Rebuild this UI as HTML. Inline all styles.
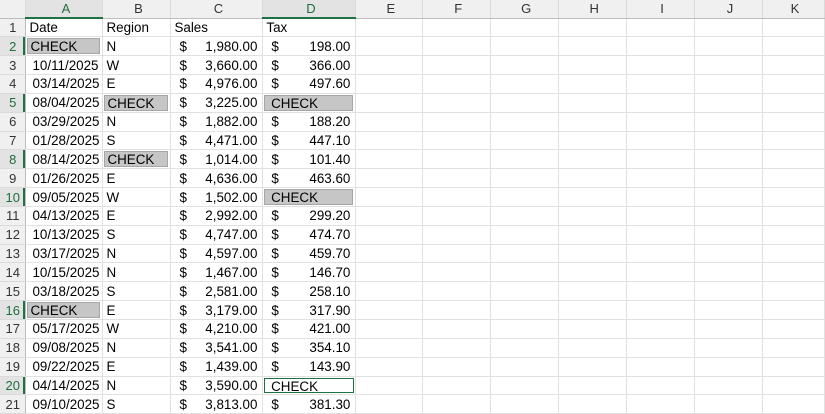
<!DOCTYPE html>
<html><head><meta charset="utf-8"><style>
*{margin:0;padding:0;box-sizing:border-box}
body{width:825px;height:406px;overflow:hidden;background:#fff;font-family:"Liberation Sans",Arial,sans-serif;font-size:13.4px;color:#000}
table{border-collapse:collapse;table-layout:fixed;position:absolute;left:0;top:0}
td{border-right:1px solid #e1e1e1;border-bottom:1px solid #e1e1e1;height:18.85px;white-space:nowrap;overflow:hidden;padding:0 0 0 3px;position:relative;line-height:17px}
tr.h td{height:18px;background:#f0f0f0;text-align:center;color:#333;border-right:1px solid #dadada;border-bottom:1px solid #bdbdbd;font-size:13px}
tr.h td.s{background:#e3e3e3;color:#1e6e3e;border-bottom:2px solid #1e7145}
td.r{background:#f0f0f0;text-align:center;color:#333;border-right:1px solid #bdbdbd;border-bottom:1px solid #dadada;padding:0;font-size:13px}
td.rs{background:#e3e3e3;color:#1e6e3e;box-shadow:inset -2px 0 0 #1e7145}
td.d{padding-left:6px}
.c{position:absolute;left:1px;right:2px;top:1px;bottom:1px;background:#c6c6c6;border:1px solid #a6a6a6;padding-left:2px;line-height:15px}
.c.a{background:#fff;border:1px solid #1e7145;left:1px;right:1px}
.m span{float:left;padding-left:5px}
.m{text-align:right;padding-right:5px}
</style></head><body>
<table>
<colgroup><col style="width:26px"><col style="width:77px"><col style="width:68px"><col style="width:92px"><col style="width:93px"><col style="width:67px"><col style="width:68px"><col style="width:68px"><col style="width:68px"><col style="width:68px"><col style="width:68px"><col style="width:62px"></colgroup>
<tr class="h"><td></td><td class="s">A</td><td>B</td><td>C</td><td class="s">D</td><td>E</td><td>F</td><td>G</td><td>H</td><td>I</td><td>J</td><td>K</td></tr>
<tr><td class="r">1</td><td>Date</td><td>Region</td><td>Sales</td><td>Tax</td><td></td><td></td><td></td><td></td><td></td><td></td><td></td></tr>
<tr><td class="r rs">2</td><td><div class="c">CHECK</div></td><td>N</td><td class="m"><span>$</span>1,980.00</td><td class="m"><span>$</span>198.00</td><td></td><td></td><td></td><td></td><td></td><td></td><td></td></tr>
<tr><td class="r">3</td><td class="d">10/11/2025</td><td>W</td><td class="m"><span>$</span>3,660.00</td><td class="m"><span>$</span>366.00</td><td></td><td></td><td></td><td></td><td></td><td></td><td></td></tr>
<tr><td class="r">4</td><td class="d">03/14/2025</td><td>E</td><td class="m"><span>$</span>4,976.00</td><td class="m"><span>$</span>497.60</td><td></td><td></td><td></td><td></td><td></td><td></td><td></td></tr>
<tr><td class="r rs">5</td><td class="d">08/04/2025</td><td><div class="c">CHECK</div></td><td class="m"><span>$</span>3,225.00</td><td><div class="c">&nbsp;CHECK</div></td><td></td><td></td><td></td><td></td><td></td><td></td><td></td></tr>
<tr><td class="r">6</td><td class="d">03/29/2025</td><td>N</td><td class="m"><span>$</span>1,882.00</td><td class="m"><span>$</span>188.20</td><td></td><td></td><td></td><td></td><td></td><td></td><td></td></tr>
<tr><td class="r">7</td><td class="d">01/28/2025</td><td>S</td><td class="m"><span>$</span>4,471.00</td><td class="m"><span>$</span>447.10</td><td></td><td></td><td></td><td></td><td></td><td></td><td></td></tr>
<tr><td class="r rs">8</td><td class="d">08/14/2025</td><td><div class="c">CHECK</div></td><td class="m"><span>$</span>1,014.00</td><td class="m"><span>$</span>101.40</td><td></td><td></td><td></td><td></td><td></td><td></td><td></td></tr>
<tr><td class="r">9</td><td class="d">01/26/2025</td><td>E</td><td class="m"><span>$</span>4,636.00</td><td class="m"><span>$</span>463.60</td><td></td><td></td><td></td><td></td><td></td><td></td><td></td></tr>
<tr><td class="r rs">10</td><td class="d">09/05/2025</td><td>W</td><td class="m"><span>$</span>1,502.00</td><td><div class="c">&nbsp;CHECK</div></td><td></td><td></td><td></td><td></td><td></td><td></td><td></td></tr>
<tr><td class="r">11</td><td class="d">04/13/2025</td><td>E</td><td class="m"><span>$</span>2,992.00</td><td class="m"><span>$</span>299.20</td><td></td><td></td><td></td><td></td><td></td><td></td><td></td></tr>
<tr><td class="r">12</td><td class="d">10/13/2025</td><td>S</td><td class="m"><span>$</span>4,747.00</td><td class="m"><span>$</span>474.70</td><td></td><td></td><td></td><td></td><td></td><td></td><td></td></tr>
<tr><td class="r">13</td><td class="d">03/17/2025</td><td>N</td><td class="m"><span>$</span>4,597.00</td><td class="m"><span>$</span>459.70</td><td></td><td></td><td></td><td></td><td></td><td></td><td></td></tr>
<tr><td class="r">14</td><td class="d">10/15/2025</td><td>N</td><td class="m"><span>$</span>1,467.00</td><td class="m"><span>$</span>146.70</td><td></td><td></td><td></td><td></td><td></td><td></td><td></td></tr>
<tr><td class="r">15</td><td class="d">03/18/2025</td><td>S</td><td class="m"><span>$</span>2,581.00</td><td class="m"><span>$</span>258.10</td><td></td><td></td><td></td><td></td><td></td><td></td><td></td></tr>
<tr><td class="r rs">16</td><td><div class="c">CHECK</div></td><td>E</td><td class="m"><span>$</span>3,179.00</td><td class="m"><span>$</span>317.90</td><td></td><td></td><td></td><td></td><td></td><td></td><td></td></tr>
<tr><td class="r">17</td><td class="d">05/17/2025</td><td>W</td><td class="m"><span>$</span>4,210.00</td><td class="m"><span>$</span>421.00</td><td></td><td></td><td></td><td></td><td></td><td></td><td></td></tr>
<tr><td class="r">18</td><td class="d">09/08/2025</td><td>N</td><td class="m"><span>$</span>3,541.00</td><td class="m"><span>$</span>354.10</td><td></td><td></td><td></td><td></td><td></td><td></td><td></td></tr>
<tr><td class="r">19</td><td class="d">09/22/2025</td><td>E</td><td class="m"><span>$</span>1,439.00</td><td class="m"><span>$</span>143.90</td><td></td><td></td><td></td><td></td><td></td><td></td><td></td></tr>
<tr><td class="r rs">20</td><td class="d">04/14/2025</td><td>N</td><td class="m"><span>$</span>3,590.00</td><td><div class="c a">&nbsp;CHECK</div></td><td></td><td></td><td></td><td></td><td></td><td></td><td></td></tr>
<tr><td class="r">21</td><td class="d">09/10/2025</td><td>S</td><td class="m"><span>$</span>3,813.00</td><td class="m"><span>$</span>381.30</td><td></td><td></td><td></td><td></td><td></td><td></td><td></td></tr>
</table>
</body></html>
